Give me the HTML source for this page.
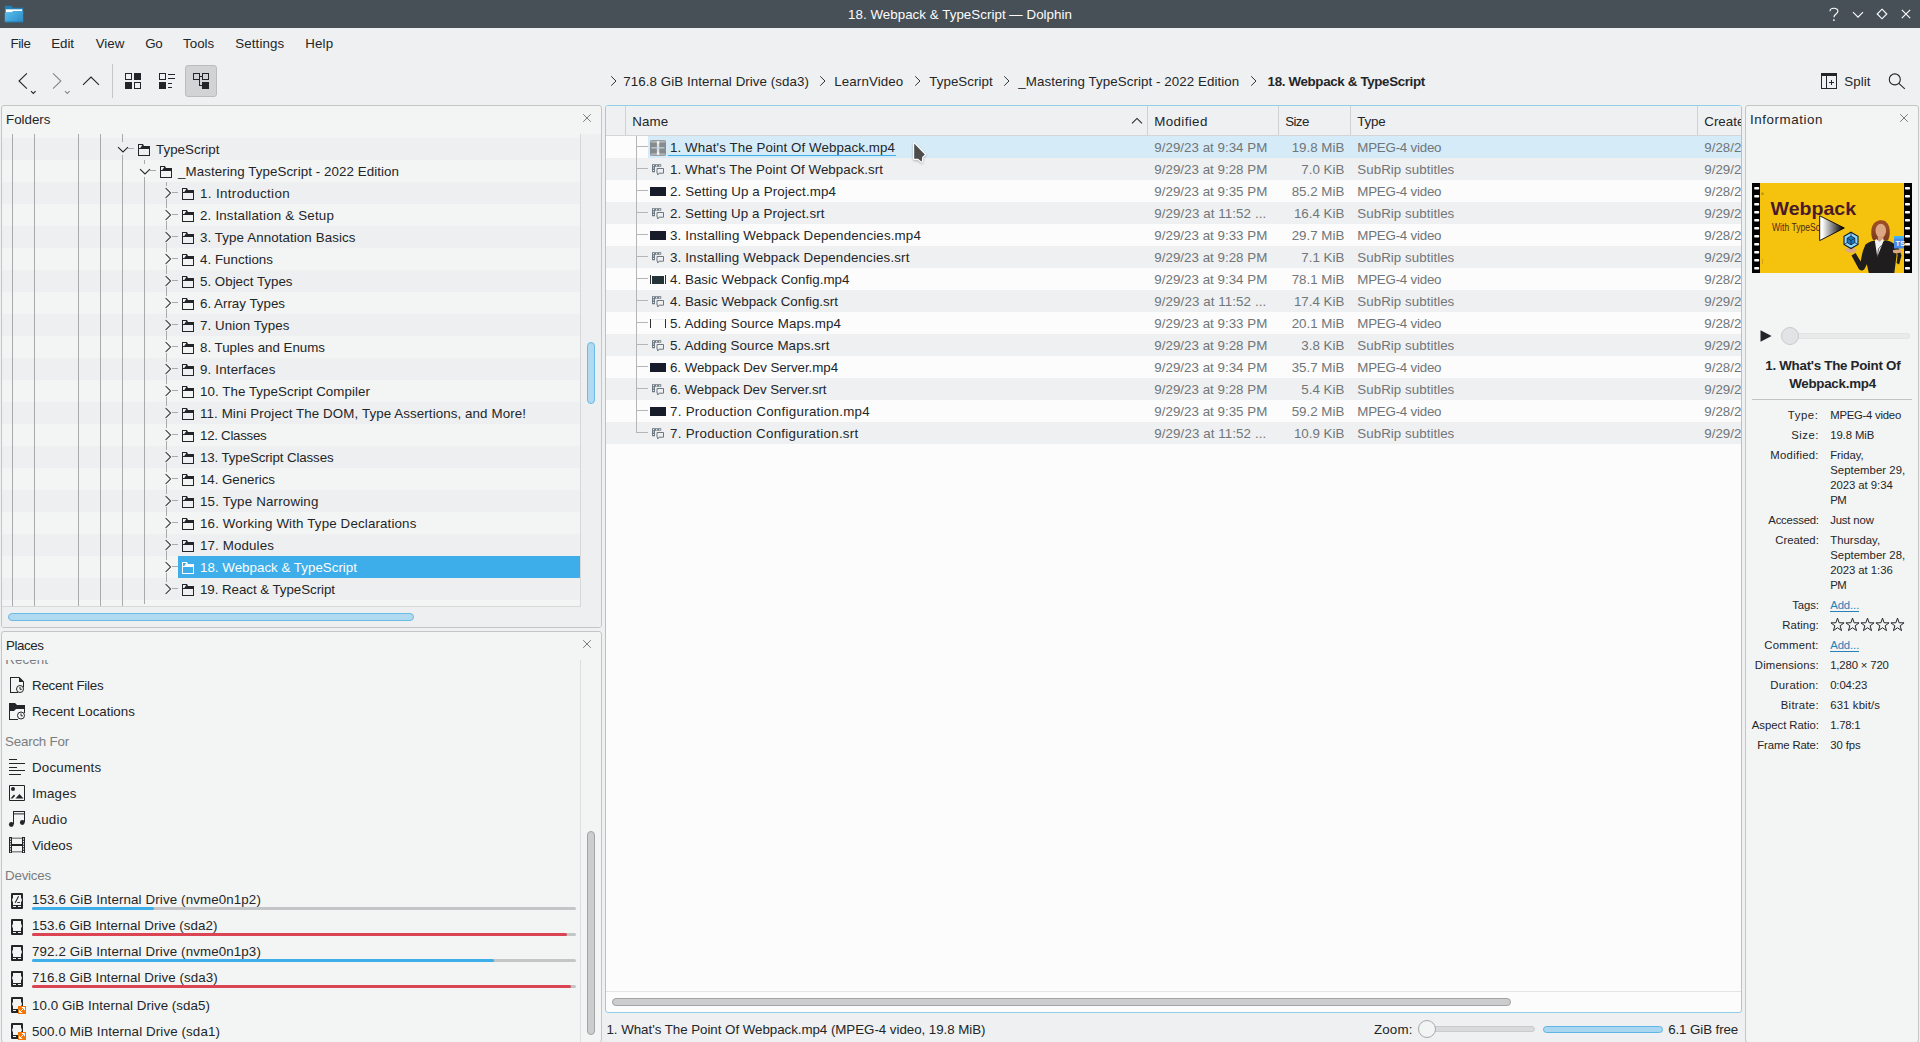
<!DOCTYPE html>
<html><head><meta charset="utf-8"><title>Dolphin</title><style>html,body{margin:0;padding:0}html{overflow:hidden;width:1920px;height:1042px}body{width:1920px;height:1042px;overflow:hidden;position:relative;background:#eff0f1;font-family:"Liberation Sans",sans-serif;font-size:13.333px;color:#232629}
body div,body span,body svg{position:absolute;display:block}span{white-space:pre}div span{position:absolute}</style></head><body>
<div style="left:0px;top:0px;width:1920px;height:28px;background:#475057"></div>
<svg style="left:4px;top:5px;" width="20" height="18" viewBox="0 0 20 18"><defs><linearGradient id="fg" x1="0" y1="0.3" x2="1" y2="1"><stop offset="0" stop-color="#52b9ec"/><stop offset="1" stop-color="#2c8bc4"/></linearGradient></defs>
<path d="M.8.7h6.4l1.6 2H19.200v4H.8z" fill="#237fb6"/>
<path d="M1.800 4.300h16.400v3.400H1.800z" fill="#fcfcfc"/>
<path d="M.8 17.300V7.500l1.200-.2h5.600l1.500-1.300h10.100V17.300z" fill="url(#fg)"/>
<path d="M.8 16.600h18.400v.7H.8z" fill="#1c6fa5"/></svg>
<span style="top:7px;font-size:13.333px;line-height:16px;color:#fcfcfc;letter-spacing:0.044px;left:660px;width:600px;text-align:center;">18. Webpack &amp; TypeScript — Dolphin</span>
<svg style="left:1826px;top:6px;overflow:visible" width="16" height="16" viewBox="0 0 16 16"><path d="M4 5.2c0-1.9 1.7-3 3.9-3 2.3 0 4 1.2 4 3.1 0 2.6-4 3-4 6" stroke="#fcfcfc" stroke-width="1.15" fill="none"/><circle cx="7.9" cy="14.1" r="0.95" fill="#fcfcfc"/></svg>
<svg style="left:1850px;top:6px;" width="16" height="16" viewBox="0 0 16 16"><path d="M3 6.100l5 5 5-5" stroke="#fcfcfc" stroke-width="1.15" fill="none"/></svg>
<svg style="left:1874px;top:6px;" width="16" height="16" viewBox="0 0 16 16"><path d="M8 3.200l4.800 4.800L8 12.800 3.200 8z" stroke="#fcfcfc" stroke-width="1.15" fill="none"/></svg>
<svg style="left:1898px;top:6px;" width="16" height="16" viewBox="0 0 16 16"><path d="M3.800 3.800l8.400 8.400M12.200 3.800l-8.400 8.400" stroke="#fcfcfc" stroke-width="1.15" fill="none"/></svg>
<span style="top:36px;font-size:13.333px;line-height:16px;color:#232629;letter-spacing:-0.371px;left:10.5px;">File</span>
<span style="top:36px;font-size:13.333px;line-height:16px;color:#232629;letter-spacing:-0.067px;left:51.3px;">Edit</span>
<span style="top:36px;font-size:13.333px;line-height:16px;color:#232629;letter-spacing:-0.014px;left:95.7px;">View</span>
<span style="top:36px;font-size:13.333px;line-height:16px;color:#232629;letter-spacing:-0.391px;left:145.3px;">Go</span>
<span style="top:36px;font-size:13.333px;line-height:16px;color:#232629;letter-spacing:0.035px;left:183px;">Tools</span>
<span style="top:36px;font-size:13.333px;line-height:16px;color:#232629;letter-spacing:0.104px;left:235.3px;">Settings</span>
<span style="top:36px;font-size:13.333px;line-height:16px;color:#232629;letter-spacing:0.145px;left:305.3px;">Help</span>
<svg style="left:14px;top:70px;" width="26" height="26" viewBox="0 0 26 26"><path d="M12.9 3.4L5 11l7.9 7.6" stroke="#232629" stroke-width="1.1" fill="none"/><path d="M17 21.2l2.3 2.3 2.3-2.3" stroke="#232629" stroke-width="1.1" fill="none"/></svg>
<svg style="left:48px;top:70px;" width="26" height="26" viewBox="0 0 26 26"><path d="M5 3.4L12.9 11 5 18.6" stroke="#85888a" stroke-width="1.1" fill="none"/><path d="M17 21.2l2.3 2.3 2.3-2.3" stroke="#85888a" stroke-width="1.1" fill="none"/></svg>
<svg style="left:80px;top:70px;" width="22" height="22" viewBox="0 0 22 22"><path d="M3 14.8L11 7l8 7.8" stroke="#232629" stroke-width="1.1" fill="none"/></svg>
<div style="left:112px;top:64px;width:1px;height:34px;background:#c4c6c8"></div>
<svg style="left:125px;top:73px;" width="16" height="16" viewBox="0 0 16 16"><path d="M0 0h7v7H0zM1 1v5h5V1zM9 0h7v7H9zM0 9h7v7H0zM9 9h7v7H9zM10 10v5h5v-5z" fill="#232629" fill-rule="evenodd"/></svg>
<svg style="left:159px;top:73px;" width="16" height="16" viewBox="0 0 16 16"><path d="M0 0h7v7H0zM1 1v5h5V1zM0 9h7v7H0zM9 1h7v1H9zM9 5h7v1H9zM9 10h4v1H9zM9 14h4v1H9z" fill="#232629" fill-rule="evenodd"/></svg>
<div style="left:185px;top:65px;width:32px;height:32px;background:#d1d3d4;border:1px solid #babcbe;border-radius:3px;box-sizing:border-box"></div>
<svg style="left:193px;top:73px;" width="16" height="16" viewBox="0 0 16 16"><path d="M0 0h7v7H0zM1 1v5h5V1zM9 0h7v7H9zM10 1v5h5V1zM9 9h7v7H9zM7 3h2v1H7zM6 7h1v5H6zM6 12h3v1H6z" fill="#232629" fill-rule="evenodd"/></svg>
<svg style="left:609.5px;top:75px;" width="8" height="12" viewBox="0 0 8 12"><path d="M1.200 1.300l4.800 4.700-4.800 4.700" stroke="#34373a" stroke-width="1" fill="none"/></svg>
<span style="top:74px;font-size:13.333px;line-height:16px;color:#232629;letter-spacing:0.064px;left:623.3px;">716.8 GiB Internal Drive (sda3)</span>
<svg style="left:819px;top:75px;" width="8" height="12" viewBox="0 0 8 12"><path d="M1.200 1.300l4.800 4.700-4.800 4.700" stroke="#34373a" stroke-width="1" fill="none"/></svg>
<span style="top:74px;font-size:13.333px;line-height:16px;color:#232629;letter-spacing:0.106px;left:834.3px;">LearnVideo</span>
<svg style="left:913.5px;top:75px;" width="8" height="12" viewBox="0 0 8 12"><path d="M1.200 1.300l4.800 4.700-4.800 4.700" stroke="#34373a" stroke-width="1" fill="none"/></svg>
<span style="top:74px;font-size:13.333px;line-height:16px;color:#232629;letter-spacing:0.043px;left:929.3px;">TypeScript</span>
<svg style="left:1003px;top:75px;" width="8" height="12" viewBox="0 0 8 12"><path d="M1.200 1.300l4.800 4.700-4.800 4.700" stroke="#34373a" stroke-width="1" fill="none"/></svg>
<span style="top:74px;font-size:13.333px;line-height:16px;color:#232629;letter-spacing:0.075px;left:1018.3px;">_Mastering TypeScript - 2022 Edition</span>
<svg style="left:1249.5px;top:75px;" width="8" height="12" viewBox="0 0 8 12"><path d="M1.200 1.300l4.800 4.700-4.800 4.700" stroke="#34373a" stroke-width="1" fill="none"/></svg>
<span style="top:74px;font-size:13.333px;line-height:16px;color:#232629;font-weight:700;letter-spacing:-0.339px;left:1267.6px;">18. Webpack &amp; TypeScript</span>
<svg style="left:1821px;top:73px;" width="16" height="16" viewBox="0 0 16 16"><path d="M0 0h16v16H0zM1 3v12h4V3zM6 3v12h9V3z" fill="#232629" fill-rule="evenodd"/><path d="M8 9.500h5M10.500 7v5" stroke="#232629" stroke-width="1"/></svg>
<span style="top:74px;font-size:13.333px;line-height:16px;color:#232629;letter-spacing:0.073px;left:1844.2px;">Split</span>
<svg style="left:1886px;top:70px;" width="22" height="22" viewBox="0 0 22 22"><circle cx="8.800" cy="9.400" r="5.500" stroke="#232629" stroke-width="1.1" fill="none"/><path d="M12.800 13.400l6 5.400" stroke="#232629" stroke-width="1.1"/></svg>
<div style="left:1px;top:105px;width:601px;height:523px;background:#f3f4f4;border:1px solid #c3c5c7;border-radius:3px;box-sizing:border-box"></div>
<div style="left:2px;top:134px;width:599px;height:493px;background:#eeeff0;border-radius:0 0 2px 2px"></div>
<div style="left:2px;top:134px;width:578px;height:472px;background:#f3f4f4"></div>
<span style="top:112px;font-size:13.333px;line-height:16px;color:#232629;letter-spacing:0.007px;left:6px;">Folders</span>
<svg style="left:581.8px;top:113px;" width="10" height="10" viewBox="0 0 10 10"><path d="M1.2 1.2l7.6 7.6M8.8 1.2L1.2 8.8" stroke="#7b7e80" stroke-width="1" fill="none"/></svg>
<div style="left:2px;top:138px;width:578px;height:22px;background:#eeeff0"></div>
<div style="left:2px;top:182px;width:578px;height:22px;background:#eeeff0"></div>
<div style="left:2px;top:226px;width:578px;height:22px;background:#eeeff0"></div>
<div style="left:2px;top:270px;width:578px;height:22px;background:#eeeff0"></div>
<div style="left:2px;top:314px;width:578px;height:22px;background:#eeeff0"></div>
<div style="left:2px;top:358px;width:578px;height:22px;background:#eeeff0"></div>
<div style="left:2px;top:402px;width:578px;height:22px;background:#eeeff0"></div>
<div style="left:2px;top:446px;width:578px;height:22px;background:#eeeff0"></div>
<div style="left:2px;top:490px;width:578px;height:22px;background:#eeeff0"></div>
<div style="left:2px;top:534px;width:578px;height:22px;background:#eeeff0"></div>
<div style="left:2px;top:578px;width:578px;height:22px;background:#eeeff0"></div>
<div style="left:580px;top:134px;width:1px;height:473px;background:#d6d8d9"></div>
<div style="left:2px;top:606px;width:579px;height:1px;background:#d6d8d9"></div>
<div style="left:587px;top:342px;width:8px;height:62px;background:#b1d9f0;border:1px solid #6bbbe7;border-radius:4px;box-sizing:border-box"></div>
<div style="left:8px;top:613px;width:406px;height:8px;background:#b1d9f0;border:1px solid #6bbbe7;border-radius:4px;box-sizing:border-box"></div>
<div style="left:12px;top:134px;width:1px;height:472px;background:#a8aaab"></div>
<div style="left:34px;top:134px;width:1px;height:472px;background:#a8aaab"></div>
<div style="left:78px;top:134px;width:1px;height:472px;background:#a8aaab"></div>
<div style="left:100px;top:134px;width:1px;height:472px;background:#a8aaab"></div>
<div style="left:122px;top:134px;width:1px;height:8px;background:#a8aaab"></div>
<div style="left:122px;top:155px;width:1px;height:451px;background:#a8aaab"></div>
<div style="left:144px;top:160px;width:1px;height:4px;background:#a8aaab"></div>
<div style="left:144px;top:177px;width:1px;height:427px;background:#a8aaab"></div>
<div style="left:166px;top:182px;width:1px;height:4px;background:#a8aaab"></div>
<div style="left:166px;top:199px;width:1px;height:9px;background:#a8aaab"></div>
<svg style="left:164px;top:187px;" width="8" height="12" viewBox="0 0 8 12"><path d="M1.6 1l4.9 5-4.9 5" stroke="#232629" stroke-width="1.05" fill="none"/></svg>
<div style="left:172px;top:192px;width:6px;height:1px;background:#a8aaab"></div>
<svg style="left:182px;top:188px;" width="12" height="12" viewBox="0 0 12 12"><path d="M0 0h5l1 2h6v10H0zM1 1v3h1.3l2-3zM1 5v6h10V5z" fill="#232629" fill-rule="evenodd"/></svg>
<span style="top:186px;font-size:13.333px;line-height:16px;color:#232629;letter-spacing:0.369px;left:200px;">1. Introduction</span>
<div style="left:166px;top:221px;width:1px;height:9px;background:#a8aaab"></div>
<svg style="left:164px;top:209px;" width="8" height="12" viewBox="0 0 8 12"><path d="M1.6 1l4.9 5-4.9 5" stroke="#232629" stroke-width="1.05" fill="none"/></svg>
<div style="left:172px;top:214px;width:6px;height:1px;background:#a8aaab"></div>
<svg style="left:182px;top:210px;" width="12" height="12" viewBox="0 0 12 12"><path d="M0 0h5l1 2h6v10H0zM1 1v3h1.3l2-3zM1 5v6h10V5z" fill="#232629" fill-rule="evenodd"/></svg>
<span style="top:208px;font-size:13.333px;line-height:16px;color:#232629;letter-spacing:0.188px;left:200px;">2. Installation &amp; Setup</span>
<div style="left:166px;top:243px;width:1px;height:9px;background:#a8aaab"></div>
<svg style="left:164px;top:231px;" width="8" height="12" viewBox="0 0 8 12"><path d="M1.6 1l4.9 5-4.9 5" stroke="#232629" stroke-width="1.05" fill="none"/></svg>
<div style="left:172px;top:236px;width:6px;height:1px;background:#a8aaab"></div>
<svg style="left:182px;top:232px;" width="12" height="12" viewBox="0 0 12 12"><path d="M0 0h5l1 2h6v10H0zM1 1v3h1.3l2-3zM1 5v6h10V5z" fill="#232629" fill-rule="evenodd"/></svg>
<span style="top:230px;font-size:13.333px;line-height:16px;color:#232629;letter-spacing:0.094px;left:200px;">3. Type Annotation Basics</span>
<div style="left:166px;top:265px;width:1px;height:9px;background:#a8aaab"></div>
<svg style="left:164px;top:253px;" width="8" height="12" viewBox="0 0 8 12"><path d="M1.6 1l4.9 5-4.9 5" stroke="#232629" stroke-width="1.05" fill="none"/></svg>
<div style="left:172px;top:258px;width:6px;height:1px;background:#a8aaab"></div>
<svg style="left:182px;top:254px;" width="12" height="12" viewBox="0 0 12 12"><path d="M0 0h5l1 2h6v10H0zM1 1v3h1.3l2-3zM1 5v6h10V5z" fill="#232629" fill-rule="evenodd"/></svg>
<span style="top:252px;font-size:13.333px;line-height:16px;color:#232629;letter-spacing:0.033px;left:200px;">4. Functions</span>
<div style="left:166px;top:287px;width:1px;height:9px;background:#a8aaab"></div>
<svg style="left:164px;top:275px;" width="8" height="12" viewBox="0 0 8 12"><path d="M1.6 1l4.9 5-4.9 5" stroke="#232629" stroke-width="1.05" fill="none"/></svg>
<div style="left:172px;top:280px;width:6px;height:1px;background:#a8aaab"></div>
<svg style="left:182px;top:276px;" width="12" height="12" viewBox="0 0 12 12"><path d="M0 0h5l1 2h6v10H0zM1 1v3h1.3l2-3zM1 5v6h10V5z" fill="#232629" fill-rule="evenodd"/></svg>
<span style="top:274px;font-size:13.333px;line-height:16px;color:#232629;letter-spacing:0.008px;left:200px;">5. Object Types</span>
<div style="left:166px;top:309px;width:1px;height:9px;background:#a8aaab"></div>
<svg style="left:164px;top:297px;" width="8" height="12" viewBox="0 0 8 12"><path d="M1.6 1l4.9 5-4.9 5" stroke="#232629" stroke-width="1.05" fill="none"/></svg>
<div style="left:172px;top:302px;width:6px;height:1px;background:#a8aaab"></div>
<svg style="left:182px;top:298px;" width="12" height="12" viewBox="0 0 12 12"><path d="M0 0h5l1 2h6v10H0zM1 1v3h1.3l2-3zM1 5v6h10V5z" fill="#232629" fill-rule="evenodd"/></svg>
<span style="top:296px;font-size:13.333px;line-height:16px;color:#232629;letter-spacing:0.003px;left:200px;">6. Array Types</span>
<div style="left:166px;top:331px;width:1px;height:9px;background:#a8aaab"></div>
<svg style="left:164px;top:319px;" width="8" height="12" viewBox="0 0 8 12"><path d="M1.6 1l4.9 5-4.9 5" stroke="#232629" stroke-width="1.05" fill="none"/></svg>
<div style="left:172px;top:324px;width:6px;height:1px;background:#a8aaab"></div>
<svg style="left:182px;top:320px;" width="12" height="12" viewBox="0 0 12 12"><path d="M0 0h5l1 2h6v10H0zM1 1v3h1.3l2-3zM1 5v6h10V5z" fill="#232629" fill-rule="evenodd"/></svg>
<span style="top:318px;font-size:13.333px;line-height:16px;color:#232629;letter-spacing:0.059px;left:200px;">7. Union Types</span>
<div style="left:166px;top:353px;width:1px;height:9px;background:#a8aaab"></div>
<svg style="left:164px;top:341px;" width="8" height="12" viewBox="0 0 8 12"><path d="M1.6 1l4.9 5-4.9 5" stroke="#232629" stroke-width="1.05" fill="none"/></svg>
<div style="left:172px;top:346px;width:6px;height:1px;background:#a8aaab"></div>
<svg style="left:182px;top:342px;" width="12" height="12" viewBox="0 0 12 12"><path d="M0 0h5l1 2h6v10H0zM1 1v3h1.3l2-3zM1 5v6h10V5z" fill="#232629" fill-rule="evenodd"/></svg>
<span style="top:340px;font-size:13.333px;line-height:16px;color:#232629;letter-spacing:-0.012px;left:200px;">8. Tuples and Enums</span>
<div style="left:166px;top:375px;width:1px;height:9px;background:#a8aaab"></div>
<svg style="left:164px;top:363px;" width="8" height="12" viewBox="0 0 8 12"><path d="M1.6 1l4.9 5-4.9 5" stroke="#232629" stroke-width="1.05" fill="none"/></svg>
<div style="left:172px;top:368px;width:6px;height:1px;background:#a8aaab"></div>
<svg style="left:182px;top:364px;" width="12" height="12" viewBox="0 0 12 12"><path d="M0 0h5l1 2h6v10H0zM1 1v3h1.3l2-3zM1 5v6h10V5z" fill="#232629" fill-rule="evenodd"/></svg>
<span style="top:362px;font-size:13.333px;line-height:16px;color:#232629;letter-spacing:0.165px;left:200px;">9. Interfaces</span>
<div style="left:166px;top:397px;width:1px;height:9px;background:#a8aaab"></div>
<svg style="left:164px;top:385px;" width="8" height="12" viewBox="0 0 8 12"><path d="M1.6 1l4.9 5-4.9 5" stroke="#232629" stroke-width="1.05" fill="none"/></svg>
<div style="left:172px;top:390px;width:6px;height:1px;background:#a8aaab"></div>
<svg style="left:182px;top:386px;" width="12" height="12" viewBox="0 0 12 12"><path d="M0 0h5l1 2h6v10H0zM1 1v3h1.3l2-3zM1 5v6h10V5z" fill="#232629" fill-rule="evenodd"/></svg>
<span style="top:384px;font-size:13.333px;line-height:16px;color:#232629;letter-spacing:0.058px;left:200px;">10. The TypeScript Compiler</span>
<div style="left:166px;top:419px;width:1px;height:9px;background:#a8aaab"></div>
<svg style="left:164px;top:407px;" width="8" height="12" viewBox="0 0 8 12"><path d="M1.6 1l4.9 5-4.9 5" stroke="#232629" stroke-width="1.05" fill="none"/></svg>
<div style="left:172px;top:412px;width:6px;height:1px;background:#a8aaab"></div>
<svg style="left:182px;top:408px;" width="12" height="12" viewBox="0 0 12 12"><path d="M0 0h5l1 2h6v10H0zM1 1v3h1.3l2-3zM1 5v6h10V5z" fill="#232629" fill-rule="evenodd"/></svg>
<span style="top:406px;font-size:13.333px;line-height:16px;color:#232629;letter-spacing:0.101px;left:200px;">11. Mini Project The DOM, Type Assertions, and More!</span>
<div style="left:166px;top:441px;width:1px;height:9px;background:#a8aaab"></div>
<svg style="left:164px;top:429px;" width="8" height="12" viewBox="0 0 8 12"><path d="M1.6 1l4.9 5-4.9 5" stroke="#232629" stroke-width="1.05" fill="none"/></svg>
<div style="left:172px;top:434px;width:6px;height:1px;background:#a8aaab"></div>
<svg style="left:182px;top:430px;" width="12" height="12" viewBox="0 0 12 12"><path d="M0 0h5l1 2h6v10H0zM1 1v3h1.3l2-3zM1 5v6h10V5z" fill="#232629" fill-rule="evenodd"/></svg>
<span style="top:428px;font-size:13.333px;line-height:16px;color:#232629;letter-spacing:-0.286px;left:200px;">12. Classes</span>
<div style="left:166px;top:463px;width:1px;height:9px;background:#a8aaab"></div>
<svg style="left:164px;top:451px;" width="8" height="12" viewBox="0 0 8 12"><path d="M1.6 1l4.9 5-4.9 5" stroke="#232629" stroke-width="1.05" fill="none"/></svg>
<div style="left:172px;top:456px;width:6px;height:1px;background:#a8aaab"></div>
<svg style="left:182px;top:452px;" width="12" height="12" viewBox="0 0 12 12"><path d="M0 0h5l1 2h6v10H0zM1 1v3h1.3l2-3zM1 5v6h10V5z" fill="#232629" fill-rule="evenodd"/></svg>
<span style="top:450px;font-size:13.333px;line-height:16px;color:#232629;letter-spacing:-0.116px;left:200px;">13. TypeScript Classes</span>
<div style="left:166px;top:485px;width:1px;height:9px;background:#a8aaab"></div>
<svg style="left:164px;top:473px;" width="8" height="12" viewBox="0 0 8 12"><path d="M1.6 1l4.9 5-4.9 5" stroke="#232629" stroke-width="1.05" fill="none"/></svg>
<div style="left:172px;top:478px;width:6px;height:1px;background:#a8aaab"></div>
<svg style="left:182px;top:474px;" width="12" height="12" viewBox="0 0 12 12"><path d="M0 0h5l1 2h6v10H0zM1 1v3h1.3l2-3zM1 5v6h10V5z" fill="#232629" fill-rule="evenodd"/></svg>
<span style="top:472px;font-size:13.333px;line-height:16px;color:#232629;letter-spacing:-0.048px;left:200px;">14. Generics</span>
<div style="left:166px;top:507px;width:1px;height:9px;background:#a8aaab"></div>
<svg style="left:164px;top:495px;" width="8" height="12" viewBox="0 0 8 12"><path d="M1.6 1l4.9 5-4.9 5" stroke="#232629" stroke-width="1.05" fill="none"/></svg>
<div style="left:172px;top:500px;width:6px;height:1px;background:#a8aaab"></div>
<svg style="left:182px;top:496px;" width="12" height="12" viewBox="0 0 12 12"><path d="M0 0h5l1 2h6v10H0zM1 1v3h1.3l2-3zM1 5v6h10V5z" fill="#232629" fill-rule="evenodd"/></svg>
<span style="top:494px;font-size:13.333px;line-height:16px;color:#232629;letter-spacing:0.176px;left:200px;">15. Type Narrowing</span>
<div style="left:166px;top:529px;width:1px;height:9px;background:#a8aaab"></div>
<svg style="left:164px;top:517px;" width="8" height="12" viewBox="0 0 8 12"><path d="M1.6 1l4.9 5-4.9 5" stroke="#232629" stroke-width="1.05" fill="none"/></svg>
<div style="left:172px;top:522px;width:6px;height:1px;background:#a8aaab"></div>
<svg style="left:182px;top:518px;" width="12" height="12" viewBox="0 0 12 12"><path d="M0 0h5l1 2h6v10H0zM1 1v3h1.3l2-3zM1 5v6h10V5z" fill="#232629" fill-rule="evenodd"/></svg>
<span style="top:516px;font-size:13.333px;line-height:16px;color:#232629;letter-spacing:0.151px;left:200px;">16. Working With Type Declarations</span>
<div style="left:166px;top:551px;width:1px;height:9px;background:#a8aaab"></div>
<svg style="left:164px;top:539px;" width="8" height="12" viewBox="0 0 8 12"><path d="M1.6 1l4.9 5-4.9 5" stroke="#232629" stroke-width="1.05" fill="none"/></svg>
<div style="left:172px;top:544px;width:6px;height:1px;background:#a8aaab"></div>
<svg style="left:182px;top:540px;" width="12" height="12" viewBox="0 0 12 12"><path d="M0 0h5l1 2h6v10H0zM1 1v3h1.3l2-3zM1 5v6h10V5z" fill="#232629" fill-rule="evenodd"/></svg>
<span style="top:538px;font-size:13.333px;line-height:16px;color:#232629;letter-spacing:0.126px;left:200px;">17. Modules</span>
<div style="left:178px;top:556px;width:402px;height:22px;background:#3daee9"></div>
<div style="left:166px;top:573px;width:1px;height:9px;background:#a8aaab"></div>
<svg style="left:164px;top:561px;" width="8" height="12" viewBox="0 0 8 12"><path d="M1.6 1l4.9 5-4.9 5" stroke="#232629" stroke-width="1.05" fill="none"/></svg>
<div style="left:172px;top:566px;width:6px;height:1px;background:#a8aaab"></div>
<svg style="left:182px;top:562px;" width="12" height="12" viewBox="0 0 12 12"><path d="M0 0h5l1 2h6v10H0zM1 1v3h1.3l2-3zM1 5v6h10V5z" fill="#fcfcfc" fill-rule="evenodd"/></svg>
<span style="top:560px;font-size:13.333px;line-height:16px;color:#fcfcfc;letter-spacing:0.018px;left:200px;">18. Webpack &amp; TypeScript</span>
<svg style="left:164px;top:583px;" width="8" height="12" viewBox="0 0 8 12"><path d="M1.6 1l4.9 5-4.9 5" stroke="#232629" stroke-width="1.05" fill="none"/></svg>
<div style="left:172px;top:588px;width:6px;height:1px;background:#a8aaab"></div>
<svg style="left:182px;top:584px;" width="12" height="12" viewBox="0 0 12 12"><path d="M0 0h5l1 2h6v10H0zM1 1v3h1.3l2-3zM1 5v6h10V5z" fill="#232629" fill-rule="evenodd"/></svg>
<span style="top:582px;font-size:13.333px;line-height:16px;color:#232629;letter-spacing:-0.049px;left:200px;">19. React &amp; TypeScript</span>
<svg style="left:117px;top:145.5px;" width="12" height="8" viewBox="0 0 12 8"><path d="M1 1.2l5 4.8 5-4.8" stroke="#232629" stroke-width="1.05" fill="none"/></svg>
<div style="left:128px;top:148px;width:6px;height:1px;background:#a8aaab"></div>
<svg style="left:138px;top:144px;" width="12" height="12" viewBox="0 0 12 12"><path d="M0 0h5l1 2h6v10H0zM1 1v3h1.3l2-3zM1 5v6h10V5z" fill="#232629" fill-rule="evenodd"/></svg>
<span style="top:142px;font-size:13.333px;line-height:16px;color:#232629;letter-spacing:0.043px;left:156px;">TypeScript</span>
<svg style="left:139px;top:167.5px;" width="12" height="8" viewBox="0 0 12 8"><path d="M1 1.2l5 4.8 5-4.8" stroke="#232629" stroke-width="1.05" fill="none"/></svg>
<div style="left:150px;top:170px;width:6px;height:1px;background:#a8aaab"></div>
<svg style="left:160px;top:166px;" width="12" height="12" viewBox="0 0 12 12"><path d="M0 0h5l1 2h6v10H0zM1 1v3h1.3l2-3zM1 5v6h10V5z" fill="#232629" fill-rule="evenodd"/></svg>
<span style="top:164px;font-size:13.333px;line-height:16px;color:#232629;letter-spacing:0.075px;left:178px;">_Mastering TypeScript - 2022 Edition</span>
<div style="left:1px;top:631px;width:601px;height:412px;background:#f3f4f4;border:1px solid #c3c5c7;border-radius:3px;box-sizing:border-box"></div>
<span style="top:638px;font-size:13.333px;line-height:16px;color:#232629;letter-spacing:-0.419px;left:6px;">Places</span>
<svg style="left:581.8px;top:639px;" width="10" height="10" viewBox="0 0 10 10"><path d="M1.2 1.2l7.6 7.6M8.8 1.2L1.2 8.8" stroke="#7b7e80" stroke-width="1" fill="none"/></svg>
<div style="left:580px;top:660px;width:1px;height:382px;background:#dcdedf"></div>
<div style="left:587px;top:831px;width:8px;height:204px;background:#cbcdce;border:1px solid #a1a3a5;border-radius:4px;box-sizing:border-box"></div>
<div style="left:2px;top:660px;width:578px;height:8px;overflow:hidden"><span style="left:3.3px;top:-8px;font-size:13.333px;line-height:16px;letter-spacing:.1px;color:#7a7d80">Recent</span></div>
<span style="top:734px;font-size:13.333px;line-height:16px;color:#7a7d80;letter-spacing:-0.194px;left:5px;">Search For</span>
<span style="top:868px;font-size:13.333px;line-height:16px;color:#7a7d80;letter-spacing:-0.201px;left:5px;">Devices</span>
<svg style="left:5px;top:673.5px;" width="22" height="22" viewBox="0 0 22 22"><path d="M5 3h9.5l4.5 4.5v6h-1V8h-4V4H6v14h7v1H5z" fill="#232629"/><path d="M14 3.5l4.5 4.5H14z" fill="#232629"/><circle cx="15" cy="15" r="3.5" fill="#f3f4f4" stroke="#232629" stroke-width="1"/><path d="M15 13v2.3h1.8" stroke="#232629" stroke-width="1" fill="none"/></svg>
<span style="top:678px;font-size:13.333px;line-height:16px;color:#232629;letter-spacing:-0.215px;left:32px;">Recent Files</span>
<svg style="left:5px;top:699.5px;" width="22" height="22" viewBox="0 0 22 22"><path d="M4 3h6l2 2h8v4h-9l-2 2H5v8h8v1H4z" fill="#232629"/><path d="M19 9h1v4h-1z" fill="#232629"/><circle cx="16" cy="15.5" r="3.5" fill="#f3f4f4" stroke="#232629" stroke-width="1"/><path d="M16 13.5v2.3h1.8" stroke="#232629" stroke-width="1" fill="none"/></svg>
<span style="top:704px;font-size:13.333px;line-height:16px;color:#232629;letter-spacing:-0.013px;left:32px;">Recent Locations</span>
<svg style="left:5px;top:755.5px;" width="22" height="22" viewBox="0 0 22 22"><path d="M4 3.500h8M4 7.500h16M4 11.500h8M4 14.500h16M4 18.500h12" stroke="#232629" stroke-width="1" fill="none"/></svg>
<span style="top:760px;font-size:13.333px;line-height:16px;color:#232629;letter-spacing:0.209px;left:32px;">Documents</span>
<svg style="left:5px;top:781.5px;" width="22" height="22" viewBox="0 0 22 22"><path d="M4.5 3.5h15v15h-15z" fill="none" stroke="#232629" stroke-width="1"/><circle cx="8" cy="7" r="2" fill="#232629"/><path d="M5.5 16.5l3.5-4 1.2 1.2-2.6 2.8zM10.5 16.5l4-4.5 4 4.5z" fill="#232629"/></svg>
<span style="top:786px;font-size:13.333px;line-height:16px;color:#232629;letter-spacing:0.130px;left:32px;">Images</span>
<svg style="left:5px;top:807.5px;" width="22" height="22" viewBox="0 0 22 22"><path d="M8.5 3.5h11v2.4h-11z" fill="none" stroke="#232629" stroke-width="1"/><path d="M8.5 3v13M19.5 3v11" stroke="#232629" stroke-width="1"/><circle cx="6.3" cy="16.5" r="2.4" fill="#232629"/><circle cx="17.3" cy="14.5" r="2.4" fill="#232629"/></svg>
<span style="top:812px;font-size:13.333px;line-height:16px;color:#232629;letter-spacing:0.281px;left:32px;">Audio</span>
<svg style="left:5px;top:833.5px;" width="22" height="22" viewBox="0 0 22 22"><path d="M4 3h3v16H4zM17 3h3v16h-3z" fill="#232629"/><path d="M7 10h10v2H7z" fill="#232629"/><path d="M7 3.600h10v1.400H7zM7 17h10v1.400H7z" fill="#8a8d8f"/><rect x="5" y="4.3" width="1" height="1.4" fill="#f3f4f4"/><rect x="5" y="6.8" width="1" height="1.4" fill="#f3f4f4"/><rect x="5" y="9.3" width="1" height="1.4" fill="#f3f4f4"/><rect x="5" y="11.8" width="1" height="1.4" fill="#f3f4f4"/><rect x="5" y="14.3" width="1" height="1.4" fill="#f3f4f4"/><rect x="5" y="16.8" width="1" height="1.4" fill="#f3f4f4"/><rect x="18" y="4.3" width="1" height="1.4" fill="#f3f4f4"/><rect x="18" y="6.8" width="1" height="1.4" fill="#f3f4f4"/><rect x="18" y="9.3" width="1" height="1.4" fill="#f3f4f4"/><rect x="18" y="11.8" width="1" height="1.4" fill="#f3f4f4"/><rect x="18" y="14.3" width="1" height="1.4" fill="#f3f4f4"/><rect x="18" y="16.8" width="1" height="1.4" fill="#f3f4f4"/></svg>
<span style="top:838px;font-size:13.333px;line-height:16px;color:#232629;letter-spacing:-0.036px;left:32px;">Videos</span>
<svg style="left:11px;top:893.0px;" width="12" height="16" viewBox="0 0 12 16"><path d="M1 0h10a1 1 0 0 1 1 1v14a1 1 0 0 1-1 1H1a1 1 0 0 1-1-1V1a1 1 0 0 1 1-1zM2 2v3.2l-.8.6v2.4l.8.6V12h8V8.8l.8-.6V5.8l-.8-.6V2z" fill="#232629" fill-rule="evenodd"/><rect x="2" y="13" width="3" height="1" fill="#f3f4f4"/><rect x="7" y="13" width="3" height="1" fill="#f3f4f4"/><path d="M7.6 3.2L4.2 9.8M6.3 9.5h2.6" stroke="#232629" stroke-width="1.1" fill="none"/></svg>
<span style="top:892px;font-size:13.333px;line-height:16px;color:#232629;letter-spacing:0.125px;left:32px;">153.6 GiB Internal Drive (nvme0n1p2)</span>
<div style="left:32px;top:907.0px;width:544px;height:3px;background:#c3c5c6;border-radius:1.5px"></div>
<div style="left:32px;top:907.0px;width:122px;height:3px;background:#3daee9;border-radius:1.5px"></div>
<svg style="left:11px;top:919.0px;" width="12" height="16" viewBox="0 0 12 16"><path d="M1 0h10a1 1 0 0 1 1 1v14a1 1 0 0 1-1 1H1a1 1 0 0 1-1-1V1a1 1 0 0 1 1-1zM2 2v3.2l-.8.6v2.4l.8.6V12h8V8.8l.8-.6V5.8l-.8-.6V2z" fill="#232629" fill-rule="evenodd"/><rect x="2" y="13" width="3" height="1" fill="#f3f4f4"/><rect x="7" y="13" width="3" height="1" fill="#f3f4f4"/></svg>
<span style="top:918px;font-size:13.333px;line-height:16px;color:#232629;letter-spacing:0.057px;left:32px;">153.6 GiB Internal Drive (sda2)</span>
<div style="left:32px;top:933.0px;width:544px;height:3px;background:#c3c5c6;border-radius:1.5px"></div>
<div style="left:32px;top:933.0px;width:535px;height:3px;background:#da4453;border-radius:1.5px"></div>
<svg style="left:11px;top:945.0px;" width="12" height="16" viewBox="0 0 12 16"><path d="M1 0h10a1 1 0 0 1 1 1v14a1 1 0 0 1-1 1H1a1 1 0 0 1-1-1V1a1 1 0 0 1 1-1zM2 2v3.2l-.8.6v2.4l.8.6V12h8V8.8l.8-.6V5.8l-.8-.6V2z" fill="#232629" fill-rule="evenodd"/><rect x="2" y="13" width="3" height="1" fill="#f3f4f4"/><rect x="7" y="13" width="3" height="1" fill="#f3f4f4"/></svg>
<span style="top:944px;font-size:13.333px;line-height:16px;color:#232629;letter-spacing:0.125px;left:32px;">792.2 GiB Internal Drive (nvme0n1p3)</span>
<div style="left:32px;top:959.0px;width:544px;height:3px;background:#c3c5c6;border-radius:1.5px"></div>
<div style="left:32px;top:959.0px;width:462px;height:3px;background:#3daee9;border-radius:1.5px"></div>
<svg style="left:11px;top:971.0px;" width="12" height="16" viewBox="0 0 12 16"><path d="M1 0h10a1 1 0 0 1 1 1v14a1 1 0 0 1-1 1H1a1 1 0 0 1-1-1V1a1 1 0 0 1 1-1zM2 2v3.2l-.8.6v2.4l.8.6V12h8V8.8l.8-.6V5.8l-.8-.6V2z" fill="#232629" fill-rule="evenodd"/><rect x="2" y="13" width="3" height="1" fill="#f3f4f4"/><rect x="7" y="13" width="3" height="1" fill="#f3f4f4"/></svg>
<span style="top:970px;font-size:13.333px;line-height:16px;color:#232629;letter-spacing:0.064px;left:32px;">716.8 GiB Internal Drive (sda3)</span>
<div style="left:32px;top:985.0px;width:544px;height:3px;background:#c3c5c6;border-radius:1.5px"></div>
<div style="left:32px;top:985.0px;width:539px;height:3px;background:#da4453;border-radius:1.5px"></div>
<svg style="left:11px;top:997.0px;" width="12" height="16" viewBox="0 0 12 16"><path d="M1 0h10a1 1 0 0 1 1 1v14a1 1 0 0 1-1 1H1a1 1 0 0 1-1-1V1a1 1 0 0 1 1-1zM2 2v3.2l-.8.6v2.4l.8.6V12h8V8.8l.8-.6V5.8l-.8-.6V2z" fill="#232629" fill-rule="evenodd"/><rect x="2" y="13" width="3" height="1" fill="#f3f4f4"/><rect x="7" y="13" width="3" height="1" fill="#f3f4f4"/></svg>
<svg style="left:18px;top:1006.0px;" width="8" height="8" viewBox="0 0 8 8"><rect width="8" height="8" fill="#f67400"/><path d="M1.6 6.4l4.8-4.8M3.8 1.5h2.7v2.7M4.2 6.5H1.5V3.8" stroke="#fcfcfc" stroke-width="1" fill="none"/></svg>
<span style="top:998px;font-size:13.333px;line-height:16px;color:#232629;letter-spacing:0.056px;left:32px;">10.0 GiB Internal Drive (sda5)</span>
<svg style="left:11px;top:1023.0px;" width="12" height="16" viewBox="0 0 12 16"><path d="M1 0h10a1 1 0 0 1 1 1v14a1 1 0 0 1-1 1H1a1 1 0 0 1-1-1V1a1 1 0 0 1 1-1zM2 2v3.2l-.8.6v2.4l.8.6V12h8V8.8l.8-.6V5.8l-.8-.6V2z" fill="#232629" fill-rule="evenodd"/><rect x="2" y="13" width="3" height="1" fill="#f3f4f4"/><rect x="7" y="13" width="3" height="1" fill="#f3f4f4"/></svg>
<svg style="left:18px;top:1032.0px;" width="8" height="8" viewBox="0 0 8 8"><rect width="8" height="8" fill="#f67400"/><path d="M1.6 6.4l4.8-4.8M3.8 1.5h2.7v2.7M4.2 6.5H1.5V3.8" stroke="#fcfcfc" stroke-width="1" fill="none"/></svg>
<span style="top:1024px;font-size:13.333px;line-height:16px;color:#232629;letter-spacing:0.114px;left:32px;">500.0 MiB Internal Drive (sda1)</span>
<div style="left:605px;top:105px;width:1137px;height:908px;background:#fcfcfc;border:1px solid #93cee9;border-radius:3px;box-sizing:border-box"></div>
<div style="left:606px;top:106px;width:1135px;height:29px;background:#eff0f1;border-radius:2px 2px 0 0"></div>
<div style="left:606px;top:135px;width:1135px;height:1px;background:#d3d5d6"></div>
<div style="left:625px;top:106px;width:1px;height:29px;background:#cfd1d2"></div>
<div style="left:1147px;top:106px;width:1px;height:29px;background:#cfd1d2"></div>
<div style="left:1278px;top:106px;width:1px;height:29px;background:#cfd1d2"></div>
<div style="left:1350px;top:106px;width:1px;height:29px;background:#cfd1d2"></div>
<div style="left:1697px;top:106px;width:1px;height:29px;background:#cfd1d2"></div>
<span style="top:114px;font-size:13.333px;line-height:16px;color:#232629;letter-spacing:0.109px;left:632.3px;">Name</span>
<span style="top:114px;font-size:13.333px;line-height:16px;color:#232629;letter-spacing:0.376px;left:1154.3px;">Modified</span>
<span style="top:114px;font-size:13.333px;line-height:16px;color:#232629;letter-spacing:-0.600px;left:1285.2px;">Size</span>
<span style="top:114px;font-size:13.333px;line-height:16px;color:#232629;letter-spacing:-0.152px;left:1357.3px;">Type</span>
<div style="left:1698px;top:106px;width:43px;height:29px;overflow:hidden"><span style="left:6.3px;top:8.00px;font-size:13.333px;line-height:16px;color:#232629">Created</span></div>
<svg style="left:1131px;top:116px;" width="12" height="9" viewBox="0 0 12 9"><path d="M1 7.4l5-5 5 5" stroke="#232629" stroke-width="1.05" fill="none"/></svg>
<div style="left:648px;top:136px;width:1093px;height:22px;background:#d6ebf8"></div>
<div style="left:637px;top:146px;width:11px;height:1px;background:#b4b6b8"></div>
<svg style="left:650px;top:140px;" width="16" height="16" viewBox="0 0 16 16"><rect width="16" height="16" rx="1.8" fill="#858b8e"/><rect x=".5" y=".5" width="15" height="2.3" rx="1" fill="#aeb3b5"/><rect x=".5" y="13.2" width="15" height="2.3" rx="1" fill="#aeb3b5"/><rect x="1.500" y="7" width="13" height="1.600" fill="#bcc1c3"/><rect x="6.900" y="1" width="2.300" height="14" fill="#dfe2e3"/><rect x="6.9" y="1.5" width="2.3" height="2" fill="#f4f5f5"/><rect x="6.9" y="12.5" width="2.3" height="2" fill="#f4f5f5"/><rect x="6.9" y="7" width="2.3" height="1.6" fill="#a9d9f4"/></svg>
<span style="top:140px;font-size:13.333px;line-height:16px;color:#232629;letter-spacing:0.086px;left:670px;">1. What's The Point Of Webpack.mp4</span>
<span style="top:140px;font-size:13.333px;line-height:16px;color:#707679;letter-spacing:0.020px;left:1154.3px;">9/29/23 at 9:34 PM</span>
<span style="top:140px;font-size:13.333px;line-height:16px;color:#707679;right:575.70px;">19.8 MiB</span>
<span style="top:140px;font-size:13.333px;line-height:16px;color:#707679;letter-spacing:-0.223px;left:1357.3px;">MPEG-4 video</span>
<div style="left:1698px;top:136px;width:43px;height:22px;overflow:hidden"><span style="left:6.3px;top:4px;font-size:13.333px;line-height:16px;color:#707679">9/28/23</span></div>
<div style="left:606px;top:158px;width:1135px;height:22px;background:#eff0f1"></div>
<div style="left:637px;top:168px;width:11px;height:1px;background:#b4b6b8"></div>
<svg style="left:650px;top:161px;" width="16" height="16" viewBox="0 0 16 16"><path d="M2 3.200H11.200V5.800H5V11.200H2zM3 4.100h1.100v1.100H3zM3 6.500h1.100v1.100H3zM3 8.900h1.100v1.100H3zM9.200 4.100h1.100v1.100H9.200zM6.100 4.100h1.100v1.100H6.100z" fill="#6c7780" fill-rule="evenodd"/><path d="M7 7.500h6.500v4.700H9.100l-1.400 1.800v-1.800H7z" stroke="#6c7780" stroke-width="1" fill="none"/></svg>
<span style="top:162px;font-size:13.333px;line-height:16px;color:#232629;letter-spacing:0.060px;left:670px;">1. What's The Point Of Webpack.srt</span>
<span style="top:162px;font-size:13.333px;line-height:16px;color:#707679;letter-spacing:0.020px;left:1154.3px;">9/29/23 at 9:28 PM</span>
<span style="top:162px;font-size:13.333px;line-height:16px;color:#707679;right:575.70px;">7.0 KiB</span>
<span style="top:162px;font-size:13.333px;line-height:16px;color:#707679;letter-spacing:0.043px;left:1357.3px;">SubRip subtitles</span>
<div style="left:1698px;top:158px;width:43px;height:22px;overflow:hidden"><span style="left:6.3px;top:4px;font-size:13.333px;line-height:16px;color:#707679">9/29/23</span></div>
<div style="left:637px;top:190px;width:11px;height:1px;background:#b4b6b8"></div>
<div style="left:650px;top:187px;width:16px;height:9px;background:#181b29"></div>
<span style="top:184px;font-size:13.333px;line-height:16px;color:#232629;letter-spacing:0.112px;left:670px;">2. Setting Up a Project.mp4</span>
<span style="top:184px;font-size:13.333px;line-height:16px;color:#707679;letter-spacing:0.020px;left:1154.3px;">9/29/23 at 9:35 PM</span>
<span style="top:184px;font-size:13.333px;line-height:16px;color:#707679;right:575.70px;">85.2 MiB</span>
<span style="top:184px;font-size:13.333px;line-height:16px;color:#707679;letter-spacing:-0.223px;left:1357.3px;">MPEG-4 video</span>
<div style="left:1698px;top:180px;width:43px;height:22px;overflow:hidden"><span style="left:6.3px;top:4px;font-size:13.333px;line-height:16px;color:#707679">9/28/23</span></div>
<div style="left:606px;top:202px;width:1135px;height:22px;background:#eff0f1"></div>
<div style="left:637px;top:212px;width:11px;height:1px;background:#b4b6b8"></div>
<svg style="left:650px;top:205px;" width="16" height="16" viewBox="0 0 16 16"><path d="M2 3.200H11.200V5.800H5V11.200H2zM3 4.100h1.100v1.100H3zM3 6.500h1.100v1.100H3zM3 8.900h1.100v1.100H3zM9.200 4.100h1.100v1.100H9.200zM6.100 4.100h1.100v1.100H6.100z" fill="#6c7780" fill-rule="evenodd"/><path d="M7 7.500h6.500v4.700H9.100l-1.400 1.800v-1.800H7z" stroke="#6c7780" stroke-width="1" fill="none"/></svg>
<span style="top:206px;font-size:13.333px;line-height:16px;color:#232629;letter-spacing:0.097px;left:670px;">2. Setting Up a Project.srt</span>
<span style="top:206px;font-size:13.333px;line-height:16px;color:#707679;letter-spacing:0.091px;left:1154.3px;">9/29/23 at 11:52 ...</span>
<span style="top:206px;font-size:13.333px;line-height:16px;color:#707679;right:575.70px;">16.4 KiB</span>
<span style="top:206px;font-size:13.333px;line-height:16px;color:#707679;letter-spacing:0.043px;left:1357.3px;">SubRip subtitles</span>
<div style="left:1698px;top:202px;width:43px;height:22px;overflow:hidden"><span style="left:6.3px;top:4px;font-size:13.333px;line-height:16px;color:#707679">9/29/23</span></div>
<div style="left:637px;top:234px;width:11px;height:1px;background:#b4b6b8"></div>
<div style="left:650px;top:231px;width:16px;height:9px;background:#181b29"></div>
<span style="top:228px;font-size:13.333px;line-height:16px;color:#232629;letter-spacing:0.158px;left:670px;">3. Installing Webpack Dependencies.mp4</span>
<span style="top:228px;font-size:13.333px;line-height:16px;color:#707679;letter-spacing:0.020px;left:1154.3px;">9/29/23 at 9:33 PM</span>
<span style="top:228px;font-size:13.333px;line-height:16px;color:#707679;right:575.70px;">29.7 MiB</span>
<span style="top:228px;font-size:13.333px;line-height:16px;color:#707679;letter-spacing:-0.223px;left:1357.3px;">MPEG-4 video</span>
<div style="left:1698px;top:224px;width:43px;height:22px;overflow:hidden"><span style="left:6.3px;top:4px;font-size:13.333px;line-height:16px;color:#707679">9/28/23</span></div>
<div style="left:606px;top:246px;width:1135px;height:22px;background:#eff0f1"></div>
<div style="left:637px;top:256px;width:11px;height:1px;background:#b4b6b8"></div>
<svg style="left:650px;top:249px;" width="16" height="16" viewBox="0 0 16 16"><path d="M2 3.200H11.200V5.800H5V11.200H2zM3 4.100h1.100v1.100H3zM3 6.500h1.100v1.100H3zM3 8.900h1.100v1.100H3zM9.200 4.100h1.100v1.100H9.200zM6.100 4.100h1.100v1.100H6.100z" fill="#6c7780" fill-rule="evenodd"/><path d="M7 7.500h6.500v4.700H9.100l-1.400 1.800v-1.800H7z" stroke="#6c7780" stroke-width="1" fill="none"/></svg>
<span style="top:250px;font-size:13.333px;line-height:16px;color:#232629;letter-spacing:0.148px;left:670px;">3. Installing Webpack Dependencies.srt</span>
<span style="top:250px;font-size:13.333px;line-height:16px;color:#707679;letter-spacing:0.020px;left:1154.3px;">9/29/23 at 9:28 PM</span>
<span style="top:250px;font-size:13.333px;line-height:16px;color:#707679;right:575.70px;">7.1 KiB</span>
<span style="top:250px;font-size:13.333px;line-height:16px;color:#707679;letter-spacing:0.043px;left:1357.3px;">SubRip subtitles</span>
<div style="left:1698px;top:246px;width:43px;height:22px;overflow:hidden"><span style="left:6.3px;top:4px;font-size:13.333px;line-height:16px;color:#707679">9/29/23</span></div>
<div style="left:637px;top:278px;width:11px;height:1px;background:#b4b6b8"></div>
<div style="left:650px;top:275px;width:1px;height:9px;background:#2e3134"></div>
<div style="left:665px;top:275px;width:1px;height:9px;background:#2e3134"></div>
<div style="left:652px;top:276px;width:12px;height:8px;background:#243438"></div>
<span style="top:272px;font-size:13.333px;line-height:16px;color:#232629;letter-spacing:0.045px;left:670px;">4. Basic Webpack Config.mp4</span>
<span style="top:272px;font-size:13.333px;line-height:16px;color:#707679;letter-spacing:0.020px;left:1154.3px;">9/29/23 at 9:34 PM</span>
<span style="top:272px;font-size:13.333px;line-height:16px;color:#707679;right:575.70px;">78.1 MiB</span>
<span style="top:272px;font-size:13.333px;line-height:16px;color:#707679;letter-spacing:-0.223px;left:1357.3px;">MPEG-4 video</span>
<div style="left:1698px;top:268px;width:43px;height:22px;overflow:hidden"><span style="left:6.3px;top:4px;font-size:13.333px;line-height:16px;color:#707679">9/28/23</span></div>
<div style="left:606px;top:290px;width:1135px;height:22px;background:#eff0f1"></div>
<div style="left:637px;top:300px;width:11px;height:1px;background:#b4b6b8"></div>
<svg style="left:650px;top:293px;" width="16" height="16" viewBox="0 0 16 16"><path d="M2 3.200H11.200V5.800H5V11.200H2zM3 4.100h1.100v1.100H3zM3 6.500h1.100v1.100H3zM3 8.900h1.100v1.100H3zM9.200 4.100h1.100v1.100H9.200zM6.100 4.100h1.100v1.100H6.100z" fill="#6c7780" fill-rule="evenodd"/><path d="M7 7.500h6.500v4.700H9.100l-1.400 1.800v-1.800H7z" stroke="#6c7780" stroke-width="1" fill="none"/></svg>
<span style="top:294px;font-size:13.333px;line-height:16px;color:#232629;letter-spacing:0.031px;left:670px;">4. Basic Webpack Config.srt</span>
<span style="top:294px;font-size:13.333px;line-height:16px;color:#707679;letter-spacing:0.091px;left:1154.3px;">9/29/23 at 11:52 ...</span>
<span style="top:294px;font-size:13.333px;line-height:16px;color:#707679;right:575.70px;">17.4 KiB</span>
<span style="top:294px;font-size:13.333px;line-height:16px;color:#707679;letter-spacing:0.043px;left:1357.3px;">SubRip subtitles</span>
<div style="left:1698px;top:290px;width:43px;height:22px;overflow:hidden"><span style="left:6.3px;top:4px;font-size:13.333px;line-height:16px;color:#707679">9/29/23</span></div>
<div style="left:637px;top:322px;width:11px;height:1px;background:#b4b6b8"></div>
<div style="left:650px;top:319px;width:1px;height:9px;background:#2e3134"></div>
<div style="left:665px;top:319px;width:1px;height:9px;background:#2e3134"></div>
<div style="left:652px;top:319px;width:12px;height:1px;background:#eceded"></div>
<span style="top:316px;font-size:13.333px;line-height:16px;color:#232629;letter-spacing:0.142px;left:670px;">5. Adding Source Maps.mp4</span>
<span style="top:316px;font-size:13.333px;line-height:16px;color:#707679;letter-spacing:0.020px;left:1154.3px;">9/29/23 at 9:33 PM</span>
<span style="top:316px;font-size:13.333px;line-height:16px;color:#707679;right:575.70px;">20.1 MiB</span>
<span style="top:316px;font-size:13.333px;line-height:16px;color:#707679;letter-spacing:-0.223px;left:1357.3px;">MPEG-4 video</span>
<div style="left:1698px;top:312px;width:43px;height:22px;overflow:hidden"><span style="left:6.3px;top:4px;font-size:13.333px;line-height:16px;color:#707679">9/28/23</span></div>
<div style="left:606px;top:334px;width:1135px;height:22px;background:#eff0f1"></div>
<div style="left:637px;top:344px;width:11px;height:1px;background:#b4b6b8"></div>
<svg style="left:650px;top:337px;" width="16" height="16" viewBox="0 0 16 16"><path d="M2 3.200H11.200V5.800H5V11.200H2zM3 4.100h1.100v1.100H3zM3 6.500h1.100v1.100H3zM3 8.900h1.100v1.100H3zM9.200 4.100h1.100v1.100H9.200zM6.100 4.100h1.100v1.100H6.100z" fill="#6c7780" fill-rule="evenodd"/><path d="M7 7.500h6.500v4.700H9.100l-1.400 1.800v-1.800H7z" stroke="#6c7780" stroke-width="1" fill="none"/></svg>
<span style="top:338px;font-size:13.333px;line-height:16px;color:#232629;letter-spacing:0.127px;left:670px;">5. Adding Source Maps.srt</span>
<span style="top:338px;font-size:13.333px;line-height:16px;color:#707679;letter-spacing:0.020px;left:1154.3px;">9/29/23 at 9:28 PM</span>
<span style="top:338px;font-size:13.333px;line-height:16px;color:#707679;right:575.70px;">3.8 KiB</span>
<span style="top:338px;font-size:13.333px;line-height:16px;color:#707679;letter-spacing:0.043px;left:1357.3px;">SubRip subtitles</span>
<div style="left:1698px;top:334px;width:43px;height:22px;overflow:hidden"><span style="left:6.3px;top:4px;font-size:13.333px;line-height:16px;color:#707679">9/29/23</span></div>
<div style="left:637px;top:366px;width:11px;height:1px;background:#b4b6b8"></div>
<div style="left:650px;top:363px;width:16px;height:9px;background:#181b29"></div>
<span style="top:360px;font-size:13.333px;line-height:16px;color:#232629;letter-spacing:-0.056px;left:670px;">6. Webpack Dev Server.mp4</span>
<span style="top:360px;font-size:13.333px;line-height:16px;color:#707679;letter-spacing:0.020px;left:1154.3px;">9/29/23 at 9:34 PM</span>
<span style="top:360px;font-size:13.333px;line-height:16px;color:#707679;right:575.70px;">35.7 MiB</span>
<span style="top:360px;font-size:13.333px;line-height:16px;color:#707679;letter-spacing:-0.223px;left:1357.3px;">MPEG-4 video</span>
<div style="left:1698px;top:356px;width:43px;height:22px;overflow:hidden"><span style="left:6.3px;top:4px;font-size:13.333px;line-height:16px;color:#707679">9/28/23</span></div>
<div style="left:606px;top:378px;width:1135px;height:22px;background:#eff0f1"></div>
<div style="left:637px;top:388px;width:11px;height:1px;background:#b4b6b8"></div>
<svg style="left:650px;top:381px;" width="16" height="16" viewBox="0 0 16 16"><path d="M2 3.200H11.200V5.800H5V11.200H2zM3 4.100h1.100v1.100H3zM3 6.500h1.100v1.100H3zM3 8.900h1.100v1.100H3zM9.200 4.100h1.100v1.100H9.200zM6.100 4.100h1.100v1.100H6.100z" fill="#6c7780" fill-rule="evenodd"/><path d="M7 7.500h6.500v4.700H9.100l-1.400 1.800v-1.800H7z" stroke="#6c7780" stroke-width="1" fill="none"/></svg>
<span style="top:382px;font-size:13.333px;line-height:16px;color:#232629;letter-spacing:-0.071px;left:670px;">6. Webpack Dev Server.srt</span>
<span style="top:382px;font-size:13.333px;line-height:16px;color:#707679;letter-spacing:0.020px;left:1154.3px;">9/29/23 at 9:28 PM</span>
<span style="top:382px;font-size:13.333px;line-height:16px;color:#707679;right:575.70px;">5.4 KiB</span>
<span style="top:382px;font-size:13.333px;line-height:16px;color:#707679;letter-spacing:0.043px;left:1357.3px;">SubRip subtitles</span>
<div style="left:1698px;top:378px;width:43px;height:22px;overflow:hidden"><span style="left:6.3px;top:4px;font-size:13.333px;line-height:16px;color:#707679">9/29/23</span></div>
<div style="left:637px;top:410px;width:11px;height:1px;background:#b4b6b8"></div>
<div style="left:650px;top:407px;width:16px;height:9px;background:#181b29"></div>
<span style="top:404px;font-size:13.333px;line-height:16px;color:#232629;letter-spacing:0.285px;left:670px;">7. Production Configuration.mp4</span>
<span style="top:404px;font-size:13.333px;line-height:16px;color:#707679;letter-spacing:0.020px;left:1154.3px;">9/29/23 at 9:35 PM</span>
<span style="top:404px;font-size:13.333px;line-height:16px;color:#707679;right:575.70px;">59.2 MiB</span>
<span style="top:404px;font-size:13.333px;line-height:16px;color:#707679;letter-spacing:-0.223px;left:1357.3px;">MPEG-4 video</span>
<div style="left:1698px;top:400px;width:43px;height:22px;overflow:hidden"><span style="left:6.3px;top:4px;font-size:13.333px;line-height:16px;color:#707679">9/28/23</span></div>
<div style="left:606px;top:422px;width:1135px;height:22px;background:#eff0f1"></div>
<div style="left:637px;top:432px;width:11px;height:1px;background:#b4b6b8"></div>
<svg style="left:650px;top:425px;" width="16" height="16" viewBox="0 0 16 16"><path d="M2 3.200H11.200V5.800H5V11.200H2zM3 4.100h1.100v1.100H3zM3 6.500h1.100v1.100H3zM3 8.900h1.100v1.100H3zM9.200 4.100h1.100v1.100H9.200zM6.100 4.100h1.100v1.100H6.100z" fill="#6c7780" fill-rule="evenodd"/><path d="M7 7.500h6.500v4.700H9.100l-1.400 1.800v-1.800H7z" stroke="#6c7780" stroke-width="1" fill="none"/></svg>
<span style="top:426px;font-size:13.333px;line-height:16px;color:#232629;letter-spacing:0.273px;left:670px;">7. Production Configuration.srt</span>
<span style="top:426px;font-size:13.333px;line-height:16px;color:#707679;letter-spacing:0.091px;left:1154.3px;">9/29/23 at 11:52 ...</span>
<span style="top:426px;font-size:13.333px;line-height:16px;color:#707679;right:575.70px;">10.9 KiB</span>
<span style="top:426px;font-size:13.333px;line-height:16px;color:#707679;letter-spacing:0.043px;left:1357.3px;">SubRip subtitles</span>
<div style="left:1698px;top:422px;width:43px;height:22px;overflow:hidden"><span style="left:6.3px;top:4px;font-size:13.333px;line-height:16px;color:#707679">9/29/23</span></div>
<div style="left:636px;top:136px;width:1px;height:297px;background:#b4b6b8"></div>
<div style="left:668px;top:155px;width:228px;height:1px;background:#3daee9"></div>
<div style="left:606px;top:991px;width:1135px;height:1px;background:#e3e4e5"></div>
<div style="left:612px;top:998px;width:899px;height:8px;background:#cbcdce;border:1px solid #a1a3a5;border-radius:4px;box-sizing:border-box"></div>
<span style="top:1022px;font-size:13.333px;line-height:16px;color:#232629;letter-spacing:-0.039px;left:606.5px;">1. What's The Point Of Webpack.mp4 (MPEG-4 video, 19.8 MiB)</span>
<span style="top:1022px;font-size:13.333px;line-height:16px;color:#232629;letter-spacing:0.144px;left:1374px;">Zoom:</span>
<div style="left:1427px;top:1026px;width:108px;height:6px;background:#d8dadb;border:1px solid #c9cbcc;border-radius:3px;box-sizing:border-box"></div>
<div style="left:1418px;top:1020px;width:18px;height:18px;background:#f3f4f4;border:1px solid #a6a9ab;border-radius:9px;box-sizing:border-box"></div>
<div style="left:1543px;top:1025.5px;width:120px;height:7px;background:#a9d6f0;border:1px solid #5fb5e6;border-radius:4px;box-sizing:border-box"></div>
<span style="top:1022px;font-size:13.333px;line-height:16px;color:#232629;letter-spacing:-0.094px;left:1668.2px;">6.1 GiB free</span>
<div style="left:1745px;top:105px;width:174px;height:938px;background:#f3f4f4;border:1px solid #c3c5c7;border-radius:3px;box-sizing:border-box"></div>
<span style="top:112px;font-size:13.333px;line-height:16px;color:#232629;letter-spacing:0.574px;left:1750px;">Information</span>
<svg style="left:1899px;top:113px;" width="10" height="10" viewBox="0 0 10 10"><path d="M1.2 1.2l7.6 7.6M8.8 1.2L1.2 8.8" stroke="#7b7e80" stroke-width="1" fill="none"/></svg>
<svg style="left:1752px;top:183px;" width="160" height="90" viewBox="0 0 160 90"><defs><linearGradient id="pg" x1="0" y1="0" x2="1" y2="0"><stop offset="0.1" stop-color="#fff"/><stop offset="0.95" stop-color="#000"/></linearGradient>
<linearGradient id="hair" x1="0" y1="0" x2="0" y2="1"><stop offset="0" stop-color="#a8542a"/><stop offset="1" stop-color="#7a3a1c"/></linearGradient></defs>
<rect width="160" height="90" fill="#f5c30e"/>
<rect width="8" height="90" fill="#000"/><rect x="152" width="8" height="90" fill="#000"/><rect x="2.2" y="4" width="5" height="2.6" rx=".8" fill="#fcfcfc"/><rect x="2.2" y="12" width="5" height="2.6" rx=".8" fill="#fcfcfc"/><rect x="2.2" y="20" width="5" height="2.6" rx=".8" fill="#fcfcfc"/><rect x="2.2" y="28" width="5" height="2.6" rx=".8" fill="#fcfcfc"/><rect x="2.2" y="36" width="5" height="2.6" rx=".8" fill="#fcfcfc"/><rect x="2.2" y="44" width="5" height="2.6" rx=".8" fill="#fcfcfc"/><rect x="2.2" y="52" width="5" height="2.6" rx=".8" fill="#fcfcfc"/><rect x="2.2" y="60" width="5" height="2.6" rx=".8" fill="#fcfcfc"/><rect x="2.2" y="68" width="5" height="2.6" rx=".8" fill="#fcfcfc"/><rect x="2.2" y="76" width="5" height="2.6" rx=".8" fill="#fcfcfc"/><rect x="2.2" y="84" width="5" height="2.6" rx=".8" fill="#fcfcfc"/><rect x="153" y="4" width="5" height="2.6" rx=".8" fill="#fcfcfc"/><rect x="153" y="12" width="5" height="2.6" rx=".8" fill="#fcfcfc"/><rect x="153" y="20" width="5" height="2.6" rx=".8" fill="#fcfcfc"/><rect x="153" y="28" width="5" height="2.6" rx=".8" fill="#fcfcfc"/><rect x="153" y="36" width="5" height="2.6" rx=".8" fill="#fcfcfc"/><rect x="153" y="44" width="5" height="2.6" rx=".8" fill="#fcfcfc"/><rect x="153" y="52" width="5" height="2.6" rx=".8" fill="#fcfcfc"/><rect x="153" y="60" width="5" height="2.6" rx=".8" fill="#fcfcfc"/><rect x="153" y="68" width="5" height="2.6" rx=".8" fill="#fcfcfc"/><rect x="153" y="76" width="5" height="2.6" rx=".8" fill="#fcfcfc"/><rect x="153" y="84" width="5" height="2.6" rx=".8" fill="#fcfcfc"/>
<text x="18.6" y="32.4" font-family="Liberation Sans, sans-serif" font-weight="700" font-size="18.6" fill="#4a1a2a" textLength="85.5" lengthAdjust="spacingAndGlyphs">Webpack</text>
<text x="20" y="48" font-family="Liberation Sans, sans-serif" font-size="10" fill="#4e2a17" textLength="48" lengthAdjust="spacingAndGlyphs">With TypeSc</text>
<!-- woman -->
<path d="M119.300 50c-.3-8 3.600-12.800 9.400-12.800s9.400 4.600 9.100 12.600c-.1 3.400-.8 5.600-1.800 7.400h-14.800c-1.200-1.800-1.800-4-1.900-7.200z" fill="url(#hair)"/>
<ellipse cx="128.800" cy="47.800" rx="5.300" ry="7" fill="#dba883"/>
<path d="M123.300 45.500c.8-4 4-6 7.500-5.200 2.400.6 3.600 2.400 3.900 5.200l1.300-3.500-3-4-5.500-.5-4 3z" fill="#9c4c25"/>
<path d="M125.800 53.500h5.600v5.500h-5.600z" fill="#d49c78"/>
<path d="M113 62.500c1.500-2.600 6-4.300 11.200-5.200l4.400 3 4.400-3c5 .8 9.200 2.600 10.600 5.400l1 9.300-2.300 18h-25.500l-3.800-17z" fill="#1f1d1e"/>
<path d="M122.800 57.600l2.500 16.300 6.500-16.600-1-1.300-3.300 2.700-3.300-2.700z" fill="#f2f2f2"/>
<path d="M125.300 73.900l1.200-8 3-3.500" stroke="#2a2829" stroke-width=".7" fill="none"/>
<path d="M113.500 62c-2.200 3.500-3.800 10-4.800 16.500L103.500 70l-4 2.500 7 13c1.500 2.600 4.600 2.600 6.200.2l4.800-10z" fill="#1f1d1e"/>
<path d="M142.600 62.500l3 9.500-1 8 2.500 1.500 2.400-9-2.500-7z" fill="#1f1d1e"/>
<path d="M93.800 65.800c2.600-1 7.600-1 10.600.3l-1 3.200c-3 .8-6.600.5-9-.8-1.200-.7-1.600-2-.6-2.700z" fill="#dba883"/>
<path d="M140.800 67.200c2.400-.9 5.800-1 9-.4l-.5 2.500c-2.500 1.200-5.500 1.300-8 .4z" fill="#dba883"/>
<!-- TS box -->
<rect x="142" y="53" width="10" height="12.500" fill="#4a8ce6"/><rect x="142" y="53" width="10" height="2.500" fill="#43b4ef"/>
<text x="143.600" y="63.300" font-family="Liberation Sans, sans-serif" font-weight="700" font-size="7.500" fill="#f4f7fb">TS</text>
<!-- webpack cube -->
<path d="M99 49.200l7 4v8.300l-7 4-7-4v-8.300z" fill="#8ed6fb" stroke="#0c1c2c" stroke-width="1.100"/>
<path d="M99 53l3.800 2.200v4.400L99 61.800l-3.800-2.200v-4.400z" fill="#1c78c0" stroke="#0c1c2c" stroke-width=".8"/>
<path d="M99 57.400v4.400M95.200 55.200l3.800 2.200 3.800-2.200M99 49.200V53M92 61.500l3.200-1.900M106 61.500l-3.200-1.900" stroke="#0c1c2c" stroke-width=".7" fill="none"/>
<!-- play overlay -->
<path d="M67.700 32.800v24.800L92.300 45z" fill="url(#pg)" stroke="#000" stroke-width=".9" stroke-linejoin="round"/>
<rect x="9.500" y="9.500" width="2" height="2.500" fill="#b58a1c"/><path d="M10.500 76v5" stroke="#b58a1c" stroke-width=".6"/></svg>
<svg style="left:1759px;top:329px;" width="14" height="14" viewBox="0 0 14 14"><path d="M1.500 1.200v11.600L12.600 7z" fill="#232629"/></svg>
<div style="left:1790px;top:333px;width:120px;height:6px;background:#e9eaea;border:1px solid #e2e3e4;border-radius:3px;box-sizing:border-box"></div>
<div style="left:1781px;top:327px;width:18px;height:18px;background:#e2e3e4;border:1px solid #c9cbcc;border-radius:9px;box-sizing:border-box"></div>
<span style="left:1765.30px;top:358px;font-size:13.333px;line-height:16px;font-weight:700;letter-spacing:-0.268px;color:#232629">1. What's The Point Of</span>
<span style="left:1789.15px;top:376px;font-size:13.333px;line-height:16px;font-weight:700;letter-spacing:-0.245px;color:#232629">Webpack.mp4</span>
<div style="left:1752px;top:399px;width:160px;height:1px;background:#c0c2c3"></div>
<span style="left:1787.80px;top:408px;font-size:11.33px;line-height:14px;letter-spacing:0.600px;color:#232629">Type:</span>
<span style="left:1830.2px;top:408px;font-size:11.33px;line-height:14px;letter-spacing:-0.239px;color:#232629">MPEG-4 video</span>
<span style="left:1791.30px;top:428px;font-size:11.33px;line-height:14px;letter-spacing:0.463px;color:#232629">Size:</span>
<span style="left:1830.2px;top:428px;font-size:11.33px;line-height:14px;letter-spacing:-0.090px;color:#232629">19.8 MiB</span>
<span style="left:1770.30px;top:448px;font-size:11.33px;line-height:14px;letter-spacing:0.281px;color:#232629">Modified:</span>
<span style="left:1830.2px;top:448px;font-size:11.33px;line-height:14px;letter-spacing:-0.040px;color:#232629">Friday,</span>
<span style="left:1830.2px;top:463px;font-size:11.33px;line-height:14px;letter-spacing:0.053px;color:#232629">September 29,</span>
<span style="left:1830.2px;top:478px;font-size:11.33px;line-height:14px;letter-spacing:-0.042px;color:#232629">2023 at 9:34</span>
<span style="left:1830.2px;top:493px;font-size:11.33px;line-height:14px;letter-spacing:-0.500px;color:#232629">PM</span>
<span style="left:1768.30px;top:513px;font-size:11.33px;line-height:14px;letter-spacing:-0.196px;color:#232629">Accessed:</span>
<span style="left:1830.2px;top:513px;font-size:11.33px;line-height:14px;letter-spacing:-0.152px;color:#232629">Just now</span>
<span style="left:1775.30px;top:533px;font-size:11.33px;line-height:14px;letter-spacing:0.006px;color:#232629">Created:</span>
<span style="left:1830.2px;top:533px;font-size:11.33px;line-height:14px;letter-spacing:0.052px;color:#232629">Thursday,</span>
<span style="left:1830.2px;top:548px;font-size:11.33px;line-height:14px;letter-spacing:0.053px;color:#232629">September 28,</span>
<span style="left:1830.2px;top:563px;font-size:11.33px;line-height:14px;letter-spacing:-0.042px;color:#232629">2023 at 1:36</span>
<span style="left:1830.2px;top:578px;font-size:11.33px;line-height:14px;letter-spacing:-0.500px;color:#232629">PM</span>
<span style="left:1792.30px;top:598px;font-size:11.33px;line-height:14px;letter-spacing:-0.116px;color:#232629">Tags:</span>
<span style="left:1782.30px;top:618px;font-size:11.33px;line-height:14px;letter-spacing:0.085px;color:#232629">Rating:</span>
<span style="left:1764.30px;top:638px;font-size:11.33px;line-height:14px;letter-spacing:0.281px;color:#232629">Comment:</span>
<span style="left:1754.80px;top:658px;font-size:11.33px;line-height:14px;letter-spacing:0.152px;color:#232629">Dimensions:</span>
<span style="left:1830.2px;top:658px;font-size:11.33px;line-height:14px;letter-spacing:-0.152px;color:#232629">1,280 × 720</span>
<span style="left:1770.30px;top:678px;font-size:11.33px;line-height:14px;letter-spacing:0.281px;color:#232629">Duration:</span>
<span style="left:1830.2px;top:678px;font-size:11.33px;line-height:14px;letter-spacing:-0.114px;color:#232629">0:04:23</span>
<span style="left:1780.80px;top:698px;font-size:11.33px;line-height:14px;letter-spacing:0.264px;color:#232629">Bitrate:</span>
<span style="left:1830.2px;top:698px;font-size:11.33px;line-height:14px;letter-spacing:0.150px;color:#232629">631 kbit/s</span>
<span style="left:1751.80px;top:718px;font-size:11.33px;line-height:14px;letter-spacing:-0.029px;color:#232629">Aspect Ratio:</span>
<span style="left:1830.2px;top:718px;font-size:11.33px;line-height:14px;letter-spacing:-0.250px;color:#232629">1.78:1</span>
<span style="left:1757.30px;top:738px;font-size:11.33px;line-height:14px;letter-spacing:-0.132px;color:#232629">Frame Rate:</span>
<span style="left:1830.2px;top:738px;font-size:11.33px;line-height:14px;letter-spacing:-0.060px;color:#232629">30 fps</span>
<span style="left:1830.2px;top:598px;font-size:11.33px;line-height:14px;letter-spacing:-0.102px;color:#2980b9">Add...</span>
<div style="left:1830px;top:610.7px;width:28.5px;height:1px;background:#2980b9"></div>
<span style="left:1830.2px;top:638px;font-size:11.33px;line-height:14px;letter-spacing:-0.102px;color:#2980b9">Add...</span>
<div style="left:1830px;top:650.5px;width:28.5px;height:1px;background:#2980b9"></div>
<svg style="left:1829.9px;top:616.6px;" width="15" height="15" viewBox="0 0 15 15"><path d="M7.50 1.10L9.12 5.78L14.06 5.87L10.12 8.85L11.56 13.58L7.50 10.75L3.44 13.58L4.88 8.85L0.94 5.87L5.88 5.78z" fill="none" stroke="#232629" stroke-width="1" stroke-linejoin="miter"/></svg>
<svg style="left:1845.0px;top:616.6px;" width="15" height="15" viewBox="0 0 15 15"><path d="M7.50 1.10L9.12 5.78L14.06 5.87L10.12 8.85L11.56 13.58L7.50 10.75L3.44 13.58L4.88 8.85L0.94 5.87L5.88 5.78z" fill="none" stroke="#232629" stroke-width="1" stroke-linejoin="miter"/></svg>
<svg style="left:1860.1000000000001px;top:616.6px;" width="15" height="15" viewBox="0 0 15 15"><path d="M7.50 1.10L9.12 5.78L14.06 5.87L10.12 8.85L11.56 13.58L7.50 10.75L3.44 13.58L4.88 8.85L0.94 5.87L5.88 5.78z" fill="none" stroke="#232629" stroke-width="1" stroke-linejoin="miter"/></svg>
<svg style="left:1875.2px;top:616.6px;" width="15" height="15" viewBox="0 0 15 15"><path d="M7.50 1.10L9.12 5.78L14.06 5.87L10.12 8.85L11.56 13.58L7.50 10.75L3.44 13.58L4.88 8.85L0.94 5.87L5.88 5.78z" fill="none" stroke="#232629" stroke-width="1" stroke-linejoin="miter"/></svg>
<svg style="left:1890.3000000000002px;top:616.6px;" width="15" height="15" viewBox="0 0 15 15"><path d="M7.50 1.10L9.12 5.78L14.06 5.87L10.12 8.85L11.56 13.58L7.50 10.75L3.44 13.58L4.88 8.85L0.94 5.87L5.88 5.78z" fill="none" stroke="#232629" stroke-width="1" stroke-linejoin="miter"/></svg>
<svg style="left:910px;top:140px;filter:drop-shadow(0 1px 1px rgba(0,0,0,.25))" width="20" height="26" viewBox="0 0 20 26"><path d="M4.200 3.400L14.800 14.400l-2.600 2.600-.5 4.700-3.600-3H4.200z" fill="#4d4d4d" stroke="#fdfdfd" stroke-width="2.400" stroke-linejoin="round" paint-order="stroke"/></svg>
</body></html>
